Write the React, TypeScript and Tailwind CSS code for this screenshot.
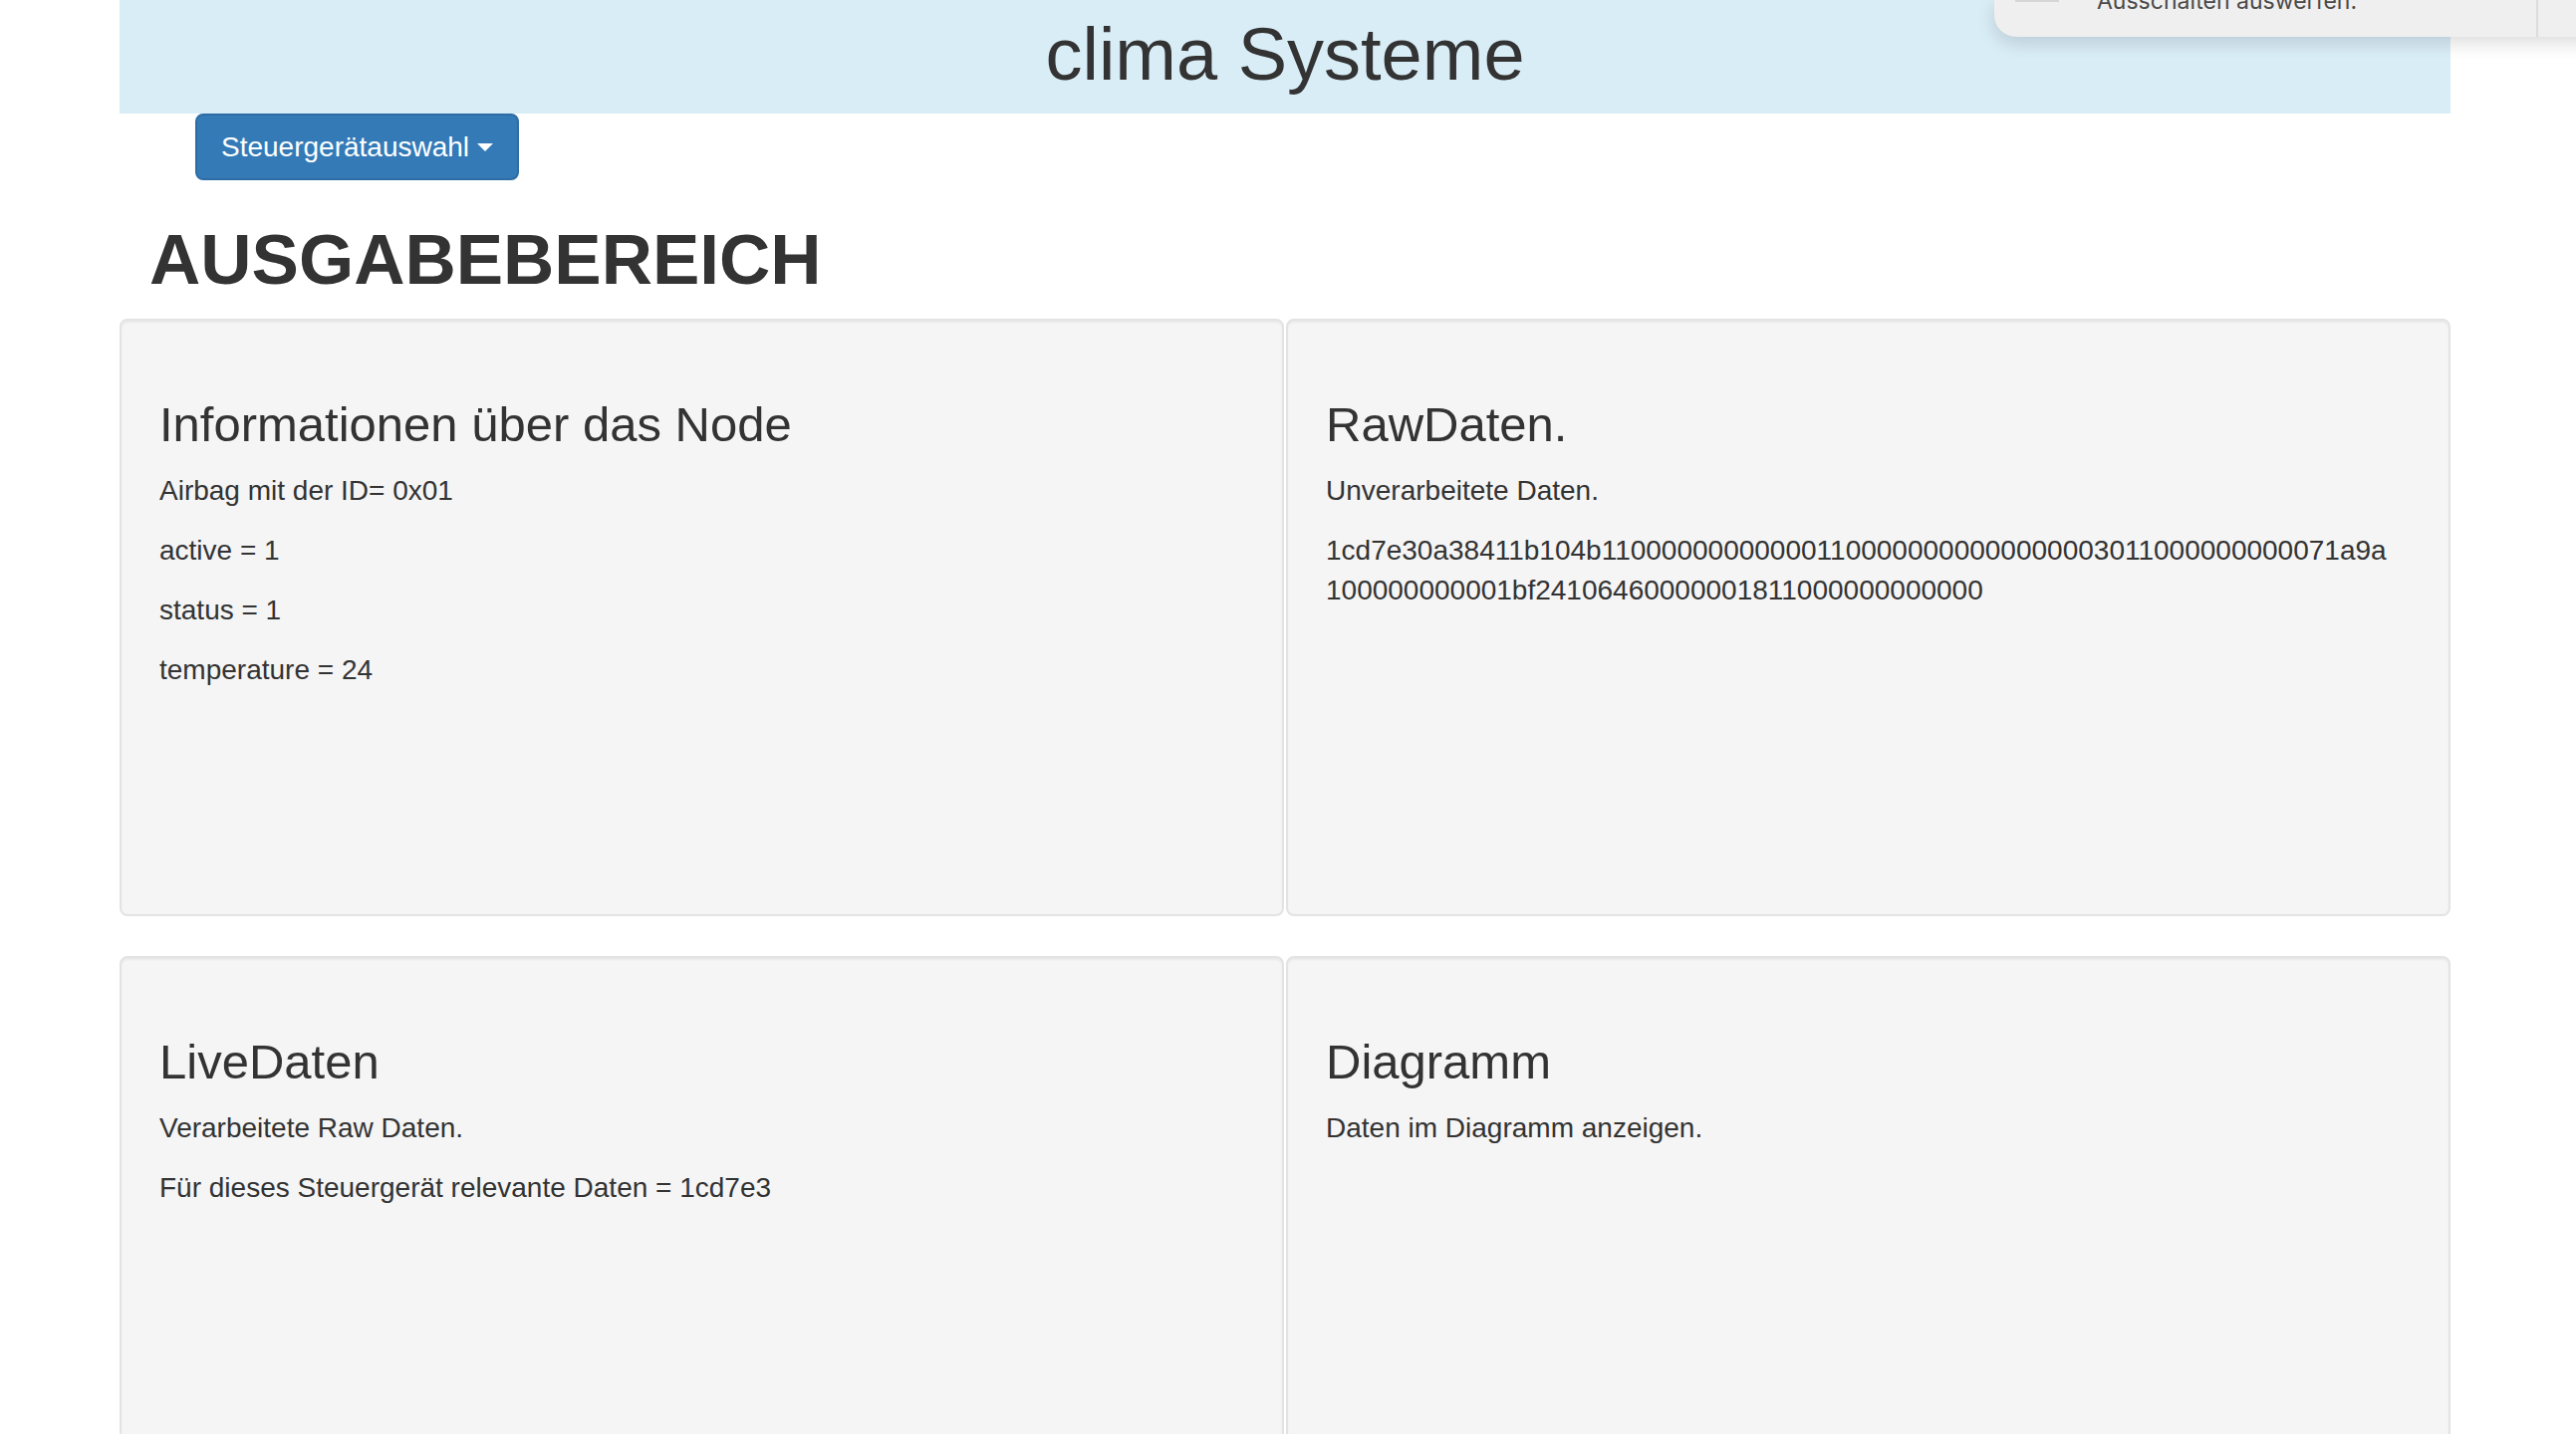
import React from 'react';

const Panel: React.FC<{ title: string; lines: React.ReactNode[] }> = ({ title, lines }) => (
  <div className="h-[600px] rounded-[8px] border-2 border-[#e3e3e3] bg-[#f5f5f5] p-[38px] shadow-[inset_0_2px_2px_rgba(0,0,0,0.05)]">
    <h3 className="mt-[40px] mb-[20px] text-[49px] leading-[53px]">{title}</h3>
    {lines.map((l, i) => (
      <p key={i} className="mb-[20px] text-[28px] leading-[40px]">
        {l}
      </p>
    ))}
  </div>
);

export default function App() {
  return (
    <div className="relative min-h-screen overflow-hidden bg-white font-['Liberation_Sans',Arial,sans-serif] text-[#333]">
      <div className="ml-[120px] w-[2340px]">
        <div className="h-[114px] bg-[#d9edf7] pt-[15px] text-center">
          <h1 className="text-[74px] leading-[79px]">clima Systeme</h1>
        </div>

        <button className="ml-[76px] flex h-[67px] items-center rounded-[8px] border-2 border-[#2e6da4] bg-[#337ab7] px-[24px] text-[28px] leading-[40px] text-white">
          Steuergerätauswahl
          <span className="ml-[8px] inline-block h-0 w-0 border-x-[8px] border-t-[8px] border-x-transparent border-t-white" />
        </button>

        <h1 className="mt-[40px] mb-[20px] pl-[30px] text-[71px] font-bold leading-[79px]">AUSGABEBEREICH</h1>

        <div className="grid grid-cols-2 gap-x-[2px]">
          <Panel
            title="Informationen über das Node"
            lines={['Airbag mit der ID= 0x01', 'active = 1', 'status = 1', 'temperature = 24']}
          />
          <Panel
            title="RawDaten."
            lines={[
              'Unverarbeitete Daten.',
              <>
                1cd7e30a38411b104b110000000000001100000000000000003011000000000071a9a
                <br />
                100000000001bf24106460000001811000000000000
              </>,
            ]}
          />
        </div>

        <div className="mt-[40px] grid grid-cols-2 gap-x-[2px]">
          <Panel
            title="LiveDaten"
            lines={['Verarbeitete Raw Daten.', 'Für dieses Steuergerät relevante Daten = 1cd7e3']}
          />
          <Panel title="Diagramm" lines={['Daten im Diagramm anzeigen.']} />
        </div>
      </div>

      {/* macOS notification partly scrolled off the top */}
      <div className="absolute left-[2002px] top-0 flex h-[37px] w-[640px] rounded-bl-[22px] bg-[#efefef] shadow-[0_6px_18px_rgba(0,0,0,0.14)]">
        <div className="flex w-[544px] items-start">
          <div className="ml-[21px] h-[2px] w-[44px] bg-[#d6d6d6]" />
          <div className="-mt-[14px] ml-[38px] font-['Inter',sans-serif] text-[23px] leading-[30px] text-[#4a4a4a]">
            Ausschalten auswerfen.
          </div>
        </div>
        <div className="w-[2px] bg-[#dcdcdc]" />
      </div>
    </div>
  );
}
